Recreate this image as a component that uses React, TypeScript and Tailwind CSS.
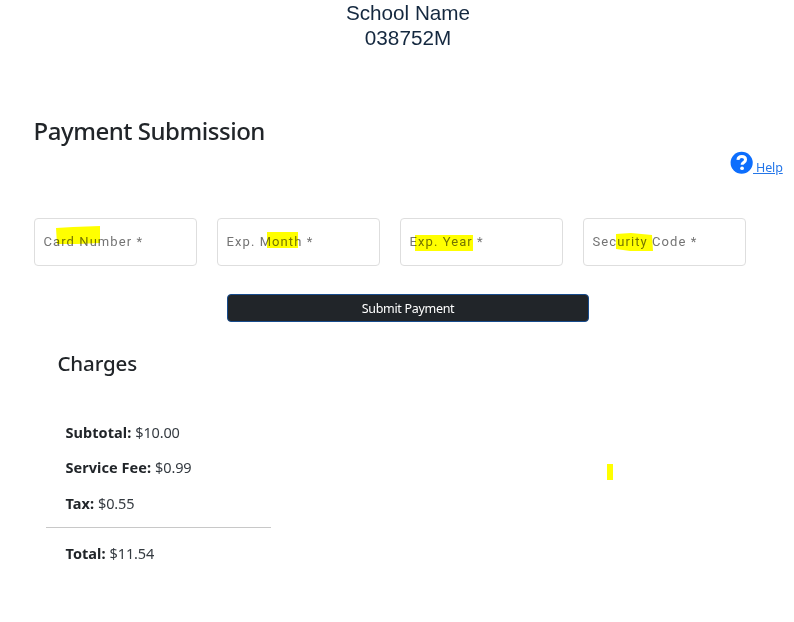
import type { ReactNode } from "react";

function Field({ label, children }: { label: string; children: ReactNode }) {
  return (
    <div className="relative flex h-12 w-[163px] items-center rounded-[4px] border border-[#dedede] pl-[8.5px]">
      <span className="whitespace-nowrap font-['Roboto',sans-serif] text-[13px] leading-5 tracking-[1.08px] text-[#747474]">
        {label}
      </span>
      {children}
    </div>
  );
}

function Charge({ label, amount }: { label: string; amount: string }) {
  return (
    <div className="flex h-5 items-center gap-1 pl-[19.5px] text-[14.5px] leading-5">
      <strong className="font-bold tracking-[0.05px]">{label}</strong>
      <span className="font-normal tracking-[-0.15px] text-[#343a40]">{amount}</span>
    </div>
  );
}

export default function App() {
  return (
    <main className="relative h-[622px] w-[794px] overflow-hidden bg-white font-['Noto_Sans','Open_Sans',sans-serif] text-[#212529]">
      <header className="ml-[22px] h-[51px] text-center font-['Liberation_Sans',Arial,sans-serif] text-[20.7px] leading-[25px] text-[#14283f]">
        <div>School Name</div>
        <div>038752M</div>
      </header>

      <h1 className="mt-[62px] ml-[33.5px] h-9 text-2xl leading-9 font-medium tracking-[-0.47px]">Payment Submission</h1>

      <div className="mt-[2px] ml-[730px] flex h-6">
        <svg width="23" height="23" viewBox="0 0 16 16" fill="#0d6efd" className="shrink-0">
          <circle cx="8.1" cy="8.2" r="7.7" />
          <path d="M5.5 6.2C5.7 4.6 6.7 3.9 8.2 3.9c1.6 0 2.6.8 2.6 2.1 0 1.8-2 1.9-2.3 3.1v.5" fill="none" stroke="#fff" strokeWidth="2.1" />
          <circle cx="8.4" cy="12" r="1.3" fill="#fff" />
        </svg>
        <a className="mt-[7px] whitespace-pre text-[12.5px] leading-5 tracking-[-0.15px] text-[#2476e8] underline underline-offset-1"> Help</a>
      </div>

      <div className="mt-[43px] ml-[34px] flex gap-5">
        <Field label="Card Number *">
          <svg className="absolute top-[6px] left-[20px] mix-blend-multiply" width="48" height="22">
            <path d="M1 3 18 2 45 1V18L22 19H2Z" fill="#ff0" />
          </svg>
        </Field>
        <Field label="Exp. Month *">
          <i className="absolute top-[13px] left-[49px] h-4 w-[31px] bg-[#ff0] mix-blend-multiply" />
        </Field>
        <Field label="Exp. Year *">
          <i className="absolute top-[16px] left-[14px] h-4 w-[58px] bg-[#ff0] mix-blend-multiply" />
        </Field>
        <Field label="Security Code *">
          <svg className="absolute top-[14px] left-[32px] mix-blend-multiply" width="40" height="20">
            <path d="M0 1 15 0 36 2 37 18 14 18 0 16Z" fill="#ff0" />
          </svg>
        </Field>
      </div>

      <button className="mt-7 ml-[227px] flex h-7 w-[362px] items-center justify-center rounded-[4px] border border-[#174b8c] bg-[#212529] pt-[2px] text-[12.5px] tracking-[-0.3px] text-white">
        Submit Payment
      </button>

      <section className="ml-[46px] w-[225px] pt-[26px]">
        <h2 className="ml-[11.5px] h-[30px] text-[20.5px] leading-[30px] font-medium tracking-[-0.15px]">Charges</h2>
        <div className="mt-[44px] flex flex-col">
          <Charge label="Subtotal:" amount="$10.00" />
          <div className="mt-[15px] mb-4">
            <Charge label="Service Fee:" amount="$0.99" />
          </div>
          <Charge label="Tax:" amount="$0.55" />
        </div>
        <hr className="mt-[14px] mb-[15px] border-[#c8c8c8]" />
        <Charge label="Total:" amount="$11.54" />
      </section>

      <i className="absolute top-[464px] left-[607px] h-4 w-[6px] bg-[#ff0]" />
    </main>
  );
}
